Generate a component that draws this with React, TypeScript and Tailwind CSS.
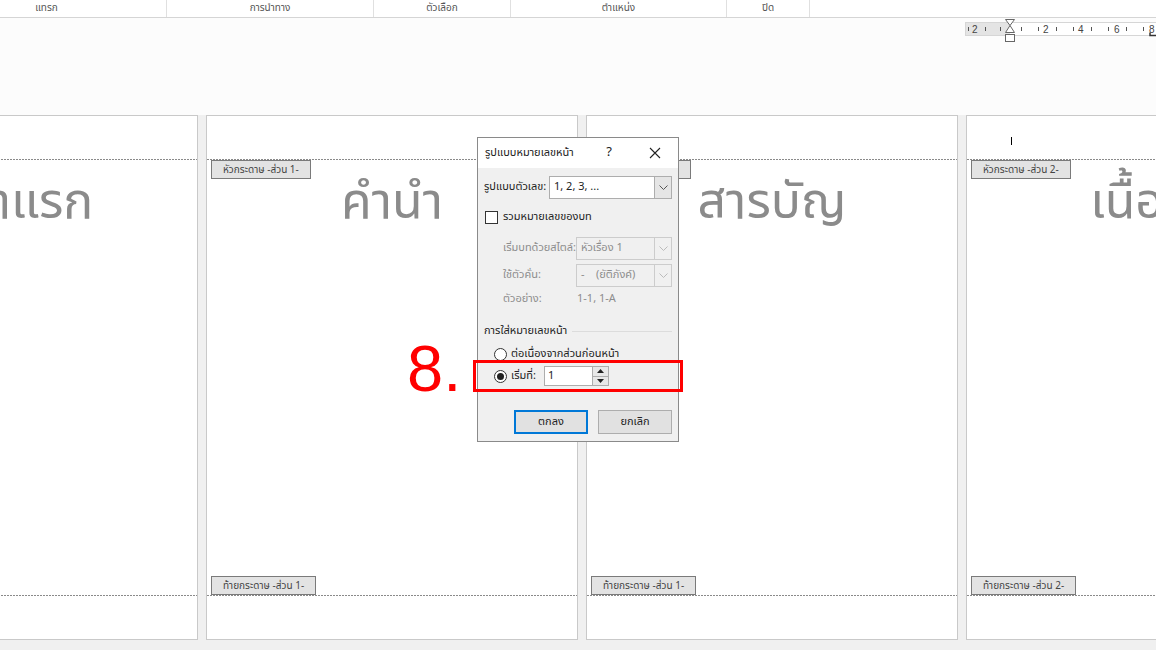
import React from "react";

const THAI = "font-['Tahoma','Leelawadee_UI','Noto_Sans_Thai','Noto_Sans','DejaVu_Sans',sans-serif]";

function Dashed() {
  return (
    <div className="h-px w-full bg-[repeating-linear-gradient(90deg,#8a8a8a_0_2px,transparent_2px_3px)]" />
  );
}

function Tag({ children }: { children: React.ReactNode }) {
  return (
    <div className="self-start ml-[4px] h-[19px] px-[11px] flex items-center border border-[#7a7a7a] bg-[#e3e3e3] text-[10px] text-[#444] leading-none whitespace-nowrap">
      {children}
    </div>
  );
}

function Page({
  title,
  header,
  footer,
  cursor,
  className = "",
}: {
  title: string;
  header: string;
  footer: string;
  cursor?: boolean;
  className?: string;
}) {
  return (
    <div className={`relative shrink-0 w-[372px] h-[525px] bg-white border border-[#c9c9c9] flex flex-col ${className}`}>
      <div className="h-[43px] relative">
        {cursor && <div className="absolute left-[44px] top-[21px] w-px h-[8px] bg-black" />}
      </div>
      <Dashed />
      <Tag>{header}</Tag>
      <div className="text-center text-[50px] leading-[56px] text-[#8b8b8b] whitespace-nowrap mt-[-4px]">{title}</div>
      <div className="flex-1" />
      <Tag>{footer}</Tag>
      <Dashed />
      <div className="h-[43px]" />
    </div>
  );
}

function Chevron({ color = "#555" }: { color?: string }) {
  return (
    <svg width="9" height="6" viewBox="0 0 9 6">
      <path d="M0.5 0.5 L4.5 4.5 L8.5 0.5" fill="none" stroke={color} strokeWidth="1" />
    </svg>
  );
}

function Select({ value, disabled }: { value: string; disabled?: boolean }) {
  return (
    <div
      className={`h-[23px] flex border ${disabled ? "border-[#cccccc] bg-[#f0f0f0] text-[#8d8d8d]" : "border-[#adadad] bg-white text-[#222]"}`}
    >
      <div className="flex-1 flex items-center pl-[4px] text-[11px] whitespace-pre">{value}</div>
      <div className={`w-[17px] flex items-center justify-center border-l ${disabled ? "border-[#cccccc] bg-[#f0f0f0]" : "border-[#adadad] bg-[#e5e5e5]"}`}>
        <Chevron color={disabled ? "#bbb" : "#555"} />
      </div>
    </div>
  );
}

function Radio({ checked }: { checked?: boolean }) {
  return (
    <div className="w-[13px] h-[13px] rounded-full border border-[#333] bg-white flex items-center justify-center">
      {checked && <div className="w-[7px] h-[7px] rounded-full bg-[#222]" />}
    </div>
  );
}

function Dialog() {
  return (
    <div className={`absolute left-[477px] top-[137px] w-[202px] h-[305px] border border-[#8a8a8a] bg-[#f0f0f0] flex flex-col text-[#222] ${THAI}`}>
      <div className="h-[30px] bg-white flex items-center pl-[7px] text-[11px]">
        <span className="flex-1">รูปแบบหมายเลขหน้า</span>
        <span className="w-[26px] mr-[10px] text-[13px] text-center">?</span>
        <span className="w-[46px] flex justify-center">
          <svg width="12" height="12" viewBox="0 0 12 12">
            <path d="M1 1 L11 11 M11 1 L1 11" stroke="#222" strokeWidth="1.1" />
          </svg>
        </span>
      </div>
      <div className="flex flex-col px-[6px] pt-[8px]">
        <div className="flex items-center h-[23px]">
          <span className="w-[65px] text-[11px] whitespace-nowrap">รูปแบบตัวเลข:</span>
          <div className="flex-1">
            <Select value="1, 2, 3, ..." />
          </div>
        </div>
        <div className="flex items-center mt-[11px] h-[14px]">
          <div className="w-[13px] h-[13px] border border-[#333] bg-white ml-[1px]" />
          <span className="ml-[5px] text-[11px]">รวมหมายเลขของบท</span>
        </div>
        <div className="flex items-center mt-[13px] h-[23px] text-[#8d8d8d]">
          <span className="w-[73px] ml-[19px] text-[11px] whitespace-nowrap">เริ่มบทด้วยสไตล์:</span>
          <div className="flex-1">
            <Select value="หัวเรื่อง 1" disabled />
          </div>
        </div>
        <div className="flex items-center mt-[4px] h-[23px] text-[#8d8d8d]">
          <span className="w-[73px] ml-[19px] text-[11px]">ใช้ตัวคั่น:</span>
          <div className="flex-1">
            <Select value="-    (ยัติภังค์)" disabled />
          </div>
        </div>
        <div className="flex items-center mt-[3px] h-[18px] text-[#8d8d8d] text-[11px]">
          <span className="w-[73px] ml-[19px]">ตัวอย่าง:</span>
          <span className="pl-[1px]">1-1, 1-A</span>
        </div>
        <div className="flex items-center mt-[16px] h-[14px]">
          <span className="text-[11px] whitespace-nowrap">การใส่หมายเลขหน้า</span>
          <div className="flex-1 ml-[5px] h-px bg-[#dcdcdc]" />
        </div>
        <div className="flex items-center mt-[9px] h-[14px] ml-[10px]">
          <Radio />
          <span className="ml-[4px] text-[11px]">ต่อเนื่องจากส่วนก่อนหน้า</span>
        </div>
        <div className="flex items-center mt-[5px] h-[20px] ml-[10px]">
          <Radio checked />
          <span className="ml-[4px] w-[33px] text-[11px]">เริ่มที่:</span>
          <div className="w-[65px] h-[20px] border border-[#adadad] bg-white flex">
            <span className="flex-1 pl-[3px] text-[11px] flex items-center text-[#222]">1</span>
            <div className="w-[16px] flex flex-col border-l border-[#adadad] bg-[#e8e8e8]">
              <div className="flex-1 flex items-center justify-center border-b border-[#adadad]">
                <svg width="7" height="4" viewBox="0 0 7 4"><path d="M0 4 L3.5 0 L7 4 Z" fill="#222" /></svg>
              </div>
              <div className="flex-1 flex items-center justify-center">
                <svg width="7" height="4" viewBox="0 0 7 4"><path d="M0 0 L3.5 4 L7 0 Z" fill="#222" /></svg>
              </div>
            </div>
          </div>
        </div>
        <div className="flex justify-end gap-[10px] mt-[24px]">
          <div className="w-[74px] h-[24px] border-2 border-[#0078d7] bg-[#e1e1e1] flex items-center justify-center text-[11px]">ตกลง</div>
          <div className="w-[74px] h-[24px] border border-[#adadad] bg-[#e1e1e1] flex items-center justify-center text-[11px]">ยกเลิก</div>
        </div>
      </div>
    </div>
  );
}

function Ruler() {
  return (
    <svg width="191" height="26" viewBox="0 0 191 26" className="absolute left-[965px] top-[18px]">
      <rect x="0.5" y="4.5" width="195" height="13" fill="#ffffff" stroke="#d6d6d6" />
      <rect x="1" y="5" width="44" height="12" fill="#e4e4e4" />
      <g fill="#555">
        <rect x="3" y="9" width="1" height="4" />
        <rect x="20" y="9" width="1" height="4" />
        <rect x="35" y="9" width="1" height="4" />
        <rect x="56" y="9" width="1" height="4" />
        <rect x="73" y="9" width="1" height="4" />
        <rect x="91" y="9" width="1" height="4" />
        <rect x="108" y="9" width="1" height="4" />
        <rect x="126" y="9" width="1" height="4" />
        <rect x="143" y="9" width="1" height="4" />
        <rect x="161" y="9" width="1" height="4" />
        <rect x="178" y="9" width="1" height="4" />
      </g>
      <g fontFamily="Liberation Sans, Arial, sans-serif" fontSize="10" fill="#444">
        <text x="7" y="15">2</text>
        <text x="78" y="15">2</text>
        <text x="113" y="15">4</text>
        <text x="149" y="15">6</text>
        <text x="184" y="15">8</text>
      </g>
      <path d="M40.5 1.5 L49.5 1.5 L45 7.5 Z" fill="#fff" stroke="#666" />
      <path d="M45 7.5 L40.5 14.5 L49.5 14.5 Z" fill="#fff" stroke="#666" />
      <rect x="40.5" y="16.5" width="9" height="7" fill="#fff" stroke="#666" />
      <path d="M185 14.5 L185 17.5 L191 17.5" fill="none" stroke="#333" strokeWidth="1.5" />
    </svg>
  );
}

const tabs: { label: string; w: string }[] = [
  { label: "แทรก", w: "w-[240px] ml-[-73px]" },
  { label: "การนำทาง", w: "w-[207px]" },
  { label: "ตัวเลือก", w: "w-[137px]" },
  { label: "ตำแหน่ง", w: "w-[216px]" },
  { label: "ปิด", w: "w-[83px]" },
];

export default function App() {
  return (
    <div className={`relative w-[1156px] h-[650px] overflow-hidden bg-[#fcfcfc] ${THAI}`}>
      <div className="h-[18px] flex border-b border-[#d5d5d5] bg-white">
        {tabs.map((t) => (
          <div key={t.label} className={`${t.w} shrink-0 h-[17px] flex items-center justify-center border-r border-[#e0e0e0] text-[10px] text-[#555]`}>
            {t.label}
          </div>
        ))}
      </div>
      <div className="h-[97px]" />
      <div className="h-[535px] bg-[#f0f0f0] flex gap-[8px] ml-[-174px]">
        <Page title="หน้าแรก" header="หัวกระดาษ -ส่วน 1-" footer="ท้ายกระดาษ -ส่วน 1-" />
        <Page title="คำนำ" header="หัวกระดาษ -ส่วน 1-" footer="ท้ายกระดาษ -ส่วน 1-" />
        <Page title="สารบัญ" header="หัวกระดาษ -ส่วน 1-" footer="ท้ายกระดาษ -ส่วน 1-" />
        <Page title="เนื้อหา" header="หัวกระดาษ -ส่วน 2-" footer="ท้ายกระดาษ -ส่วน 2-" cursor />
      </div>
      <Ruler />
      <Dialog />
      <div className="absolute left-[473px] top-[360px] w-[210px] h-[32px] border-[3px] border-[#ff0000]" />
      <div className="absolute left-[407px] top-[334px] text-[65px] leading-[70px] text-[#ff0000] font-['Liberation_Sans',Arial,sans-serif]">
        8.
      </div>
    </div>
  );
}
